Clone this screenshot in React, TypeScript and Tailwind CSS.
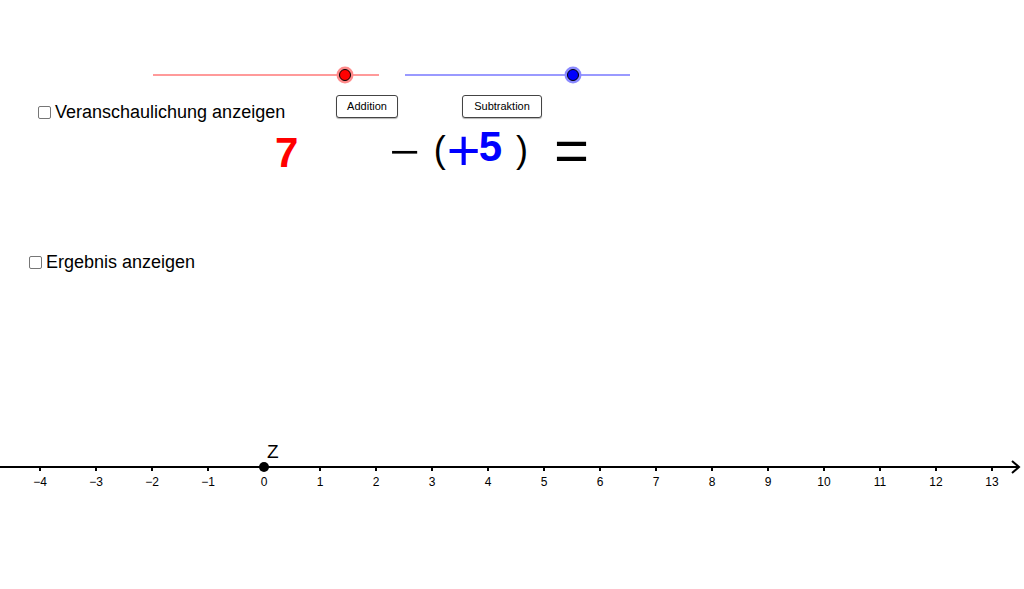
import React from 'react';

const font = { fontFamily: '"Liberation Sans", Arial, sans-serif' };

const ticks = Array.from({ length: 18 }, (_, i) => i - 4);

function Slider({ x1, x2, pos, line, halo, fill }: { x1: number; x2: number; pos: number; line: string; halo: string; fill: string }) {
    return (
        <g>
            <line x1={x1} y1={75} x2={x2} y2={75} stroke={line} strokeWidth={2} />
            <circle cx={pos} cy={75} r={8.5} fill={halo} />
            <circle cx={pos} cy={75} r={5.5} fill={fill} stroke="#000" strokeWidth={1} />
        </g>
    );
}

function Check({ label, x, y }: { label: string; x: number; y: number }) {
    return (
        <label className="absolute flex items-center gap-[4px] text-[18px] text-black leading-none" style={{ left: x, top: y }}>
            <span className="w-[13px] h-[13px] border border-[#767676] rounded-[2px] bg-white" />
            <span>{label}</span>
        </label>
    );
}

export default function App() {
    return (
        <div className="relative w-[1024px] h-[589px] bg-white overflow-hidden" style={font}>
            {/* drawing layer: sliders + number line */}
            <svg className="absolute inset-0" width={1024} height={589}>
                <Slider x1={153} x2={379} pos={345} line="#ff9a9a" halo="#ff8a8a" fill="#ff0000" />
                <Slider x1={405} x2={630} pos={573} line="#9a9aff" halo="#8a8aff" fill="#0000ff" />

                <line x1={0} y1={467} x2={1018} y2={467} stroke="#000" strokeWidth={2} />
                <path d="M1012 461 L1019 467 L1012 473" fill="none" stroke="#000" strokeWidth={2} />
                {ticks.map(t => (
                    <line key={t} x1={264 + t * 56} y1={466} x2={264 + t * 56} y2={471} stroke="#000" strokeWidth={2} />
                ))}
                {ticks.map(t => (
                    <text key={'l' + t} x={264 + t * 56} y={486} textAnchor="middle" fontSize={12} fontFamily='"Liberation Sans", Arial, sans-serif' fill="#000">
                        {t < 0 ? '\u2212' + Math.abs(t) : t}
                    </text>
                ))}
                <circle cx={264} cy={467} r={5} fill="#000" />
                <text x={267} y={458} fontSize={19} fontFamily='"Liberation Sans", Arial, sans-serif' fill="#000">Z</text>
            </svg>

            <Check label="Veranschaulichung anzeigen" x={38} y={103} />
            <Check label="Ergebnis anzeigen" x={29} y={253} />

            <button className="absolute left-[336px] top-[95px] w-[62px] h-[23px] border border-[#444] rounded-[3px] bg-white text-[11px] text-black shadow-[0_1px_1px_rgba(0,0,0,0.3)]">
                Addition
            </button>
            <button className="absolute left-[462px] top-[95px] w-[80px] h-[23px] border border-[#444] rounded-[3px] bg-white text-[11px] text-black shadow-[0_1px_1px_rgba(0,0,0,0.3)]">
                Subtraktion
            </button>

            {/* equation: 7 − (+5) = */}
            <div className="absolute left-[275px] top-[116px] flex items-start leading-none">
                <span className="mt-[16px] text-[42px] font-bold text-[#ff0000]">7</span>
                <span className="ml-[91px] mt-[9px] text-[54px] text-black" style={{ fontFamily: '"Liberation Serif", serif' }}>−</span>
                <span className="ml-[14px] mt-[16px] text-[36px] text-black">(</span>
                <span className="ml-[1px] mt-[5px] text-[58px] text-[#0000ff]">+</span>
                <span className="ml-[-2px] mt-[10px] text-[42px] font-bold text-[#0000ff]">5</span>
                <span className="ml-[14px] mt-[16px] text-[36px] text-black">)</span>
                <span className="ml-[26px] mt-[5px] text-[60px] text-black">=</span>
            </div>
        </div>
    );
}
